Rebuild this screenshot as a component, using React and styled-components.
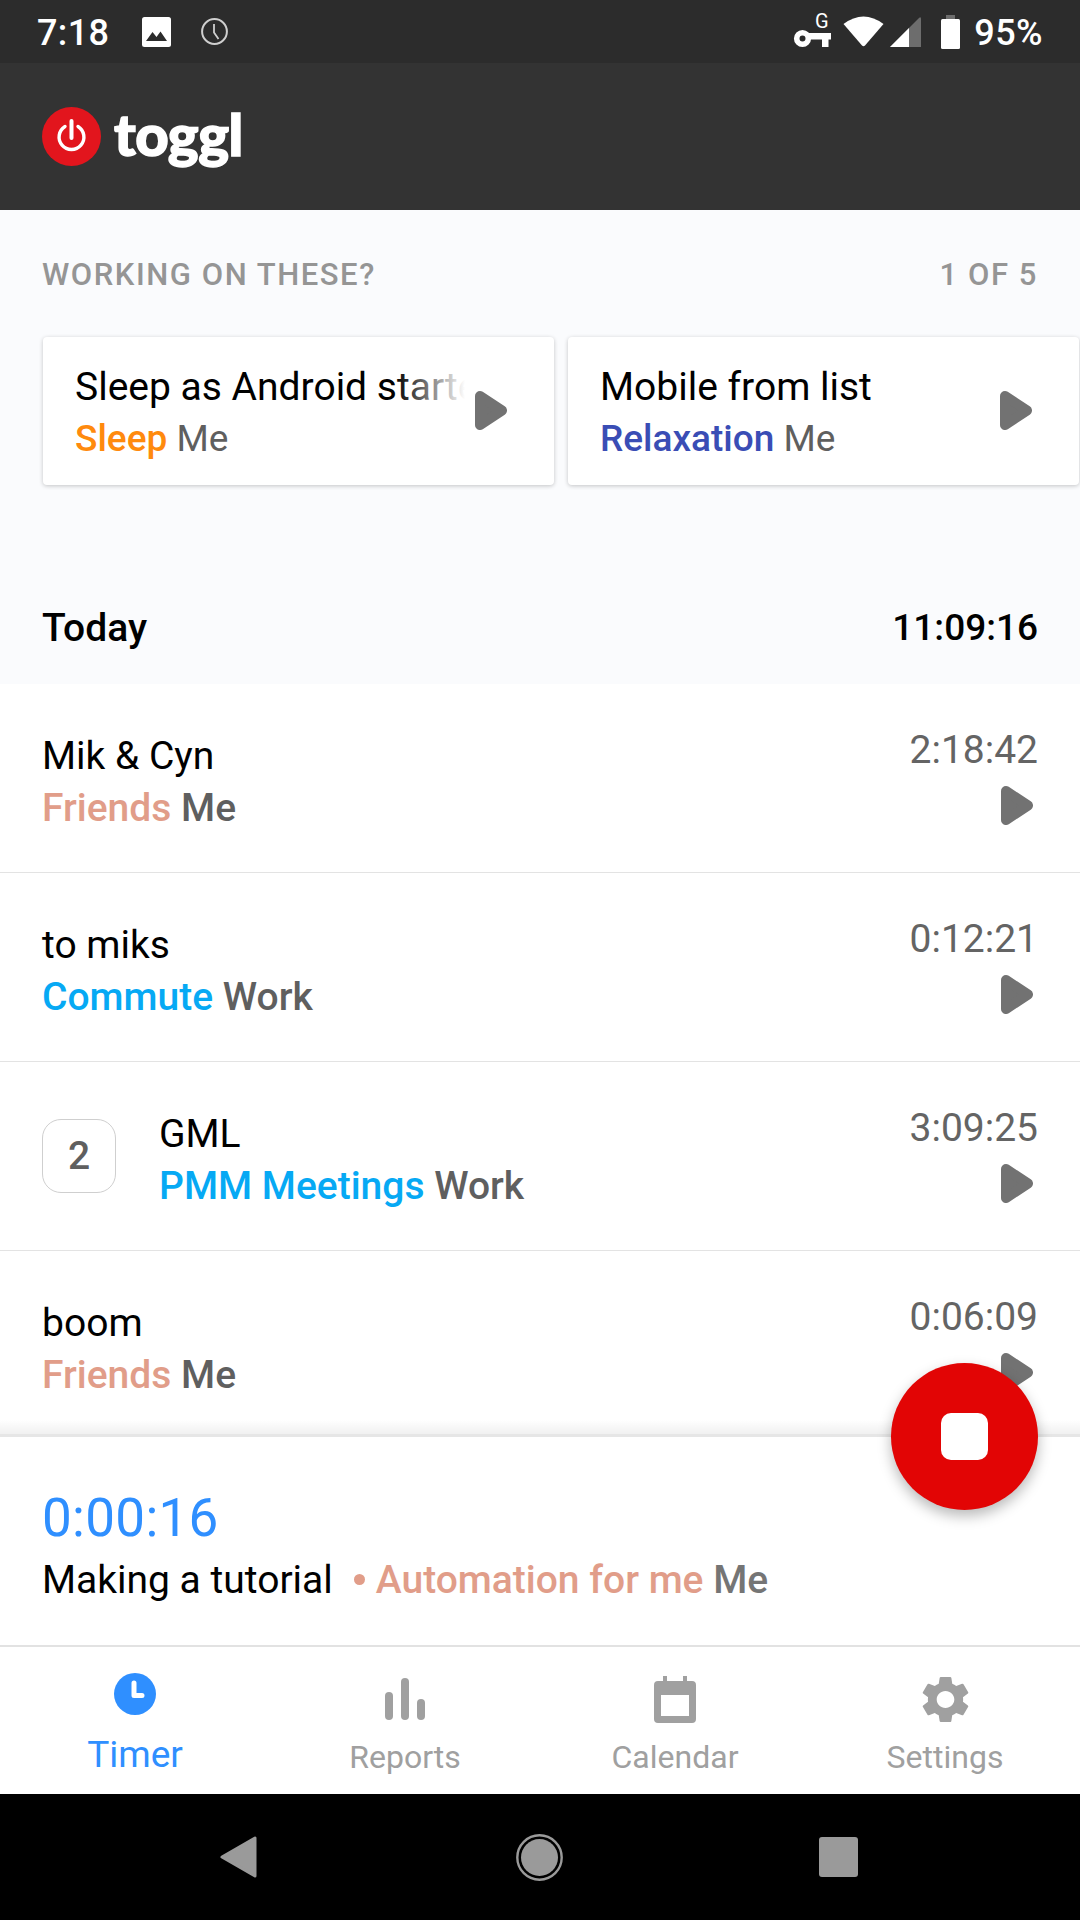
import React from "react";
import styled, { createGlobalStyle } from "styled-components";

const Global = createGlobalStyle`
  html, body { margin: 0; padding: 0; background: #fff; }
  body { font-family: Roboto, "Liberation Sans", sans-serif; }
  * { box-sizing: border-box; }
`;

const Page = styled.div`
  position: relative;
  width: 1080px;
  height: 1920px;
  display: flex;
  flex-direction: column;
  overflow: hidden;
  background: #fff;
`;

const StatusBar = styled.div`
  height: 63px;
  flex: none;
  background: #2c2c2c;
  display: flex;
  align-items: center;
  padding: 0 37px 0 37px;
  color: #fff;
  font-size: 36px;
  letter-spacing: 0.4px;
`;
const StatusLeft = styled.div`
  display: flex;
  align-items: center;
  flex: 1;
`;
const StatusTime = styled.span`
  font-weight: 500;
  margin-right: 33px;
  line-height: 63px;
  position: relative;
  top: 2px;
`;
const StatusRight = styled.div`
  display: flex;
  align-items: center;
`;
const StatusIcon = styled.svg`
  display: block;
  flex: none;
  overflow: visible;
  margin-right: ${(p) => p.$mr || 0}px;
  position: relative;
  top: ${(p) => p.$top || 0}px;
`;
const StatusPct = styled.span`
  font-weight: 500;
  margin-left: 14px;
  line-height: 63px;
  position: relative;
  top: 2px;
`;

const Header = styled.header`
  height: 147px;
  flex: none;
  background: #333333;
  display: flex;
  align-items: center;
  padding: 0 0 0 42px;
`;
const LogoMark = styled.svg`
  display: block;
  flex: none;
`;
const LogoText = styled.span`
  color: #fff;
  font-family: Lato, Roboto, sans-serif;
  font-weight: 900;
  font-size: 58px;
  letter-spacing: -0.5px;
  -webkit-text-stroke: 1.5px #fff;
  margin-left: 13px;
  line-height: 58px;
  position: relative;
  top: -3px;
`;

const Suggestions = styled.section`
  height: 474px;
  flex: none;
  background: #fafbfd;
  display: flex;
  flex-direction: column;
  padding-top: 47px;
`;
const SuggestHead = styled.div`
  display: flex;
  justify-content: space-between;
  padding: 0 42px;
  color: #959595;
  font-size: 31px;
  font-weight: 500;
  letter-spacing: 1.55px;
  line-height: 36px;
`;
const Cards = styled.div`
  display: flex;
  gap: 14px;
  margin-top: 44px;
  padding-left: 43px;
`;
const Card = styled.div`
  width: 511px;
  height: 148px;
  flex: none;
  background: #fff;
  border-radius: 4px;
  box-shadow: 0 1px 4px rgba(0, 0, 0, 0.22);
  position: relative;
  padding: 25px 0 0 32px;
`;
const CardText = styled.div`
  width: 390px;
  overflow: hidden;
  white-space: nowrap;
  position: relative;
`;
const Fade = styled.div`
  position: absolute;
  top: 0;
  right: 0;
  width: 70px;
  height: 51px;
  background: linear-gradient(to right, rgba(255, 255, 255, 0), #fff 100%);
`;
const CardPlay = styled.div`
  position: absolute;
  right: 47px;
  top: 54px;
`;
const Title = styled.div`
  color: #000;
  font-size: 39px;
  line-height: 52px;
  white-space: nowrap;
`;
const CardTitle = styled(Title)`
  line-height: 51px;
`;
const Sub = styled.div`
  font-size: 39px;
  line-height: 52px;
  color: #5f5f5f;
  white-space: nowrap;
  font-weight: 500;
`;
const CardSub = styled.div`
  font-size: 37px;
  line-height: 52px;
  color: #5f5f5f;
  white-space: nowrap;
`;
const Project = styled.span`
  color: ${(p) => p.$color};
  font-weight: 500;
`;

const DayHead = styled.div`
  margin-top: auto;
  height: 82px;
  display: flex;
  justify-content: space-between;
  align-items: flex-start;
  padding: 0 42px;
  color: #000;
  font-size: 39px;
  font-weight: 500;
  line-height: 52px;
`;
const DayTotal = styled.span`
  font-size: 37px;
`;

const List = styled.div`
  flex: 1;
  min-height: 0;
  overflow: hidden;
  position: relative;
`;
const Row = styled.div`
  height: 189px;
  border-bottom: 1px solid #e3e3e3;
  display: flex;
  align-items: flex-start;
  padding: 46px 42px 0;
`;
const Badge = styled.div`
  width: 74px;
  height: 74px;
  flex: none;
  border: 1px solid #cfcfcf;
  border-radius: 19px;
  display: flex;
  align-items: center;
  justify-content: center;
  color: #5f5f5f;
  font-size: 39px;
  font-weight: 500;
  margin: 11px 43px 0 0;
`;
const RowText = styled.div`
  flex: 1;
  min-width: 0;
`;
const RowSide = styled.div`
  display: flex;
  flex-direction: column;
  align-items: flex-end;
  color: #646464;
  font-size: 39px;
  line-height: 52px;
  margin-top: -6px;
`;
const RowPlay = styled.div`
  margin: 10px 5px 0 0;
  height: 39px;
`;

const Shade = styled.div`
  position: absolute;
  left: 0;
  right: 0;
  bottom: 0;
  height: 14px;
  background: linear-gradient(to bottom, rgba(0, 0, 0, 0), rgba(0, 0, 0, 0.06));
`;

const TimerBar = styled.div`
  height: 213px;
  flex: none;
  border-top: 3px solid #e6e6e6;
  border-bottom: 2px solid #e2e2e2;
  padding: 50px 42px 0;
`;
const Elapsed = styled.div`
  color: #2f8fff;
  font-size: 53px;
  line-height: 62px;
  letter-spacing: 0.3px;
`;
const Running = styled.div`
  display: flex;
  align-items: center;
  font-size: 39px;
  line-height: 52px;
  margin-top: 5px;
  color: #000;
  white-space: nowrap;
`;
const Dot = styled.span`
  width: 11px;
  height: 11px;
  border-radius: 50%;
  background: #e19d89;
  margin: 0 11px 0 21px;
  flex: none;
  position: relative;
  top: -1px;
`;
const RunningMeta = styled.span`
  color: #757575;
  font-weight: 500;
`;

const Fab = styled.button`
  position: absolute;
  left: 891px;
  top: 1363px;
  width: 147px;
  height: 147px;
  border-radius: 50%;
  border: 0;
  padding: 0;
  background: #e20505;
  box-shadow: 0 6px 14px rgba(0, 0, 0, 0.28);
  display: flex;
  align-items: center;
  justify-content: center;
`;
const FabStop = styled.span`
  width: 47px;
  height: 47px;
  border-radius: 10px;
  background: #fff;
`;

const Tabs = styled.nav`
  height: 147px;
  flex: none;
  display: grid;
  grid-template-columns: repeat(4, 270px);
  background: #fff;
`;
const Tab = styled.div`
  display: flex;
  flex-direction: column;
  align-items: center;
  color: ${(p) => (p.$active ? "#2f8fff" : "#a0a0a0")};
  font-size: ${(p) => (p.$active ? 37 : 32)}px;
  line-height: 40px;
`;
const TabIcon = styled.svg`
  display: block;
  flex: none;
  margin-top: ${(p) => p.$mt}px;
  margin-bottom: ${(p) => p.$mb}px;
`;

const NavBar = styled.div`
  height: 126px;
  flex: none;
  background: #000;
  display: grid;
  grid-template-columns: 296px 303px 1fr;
  align-items: center;
  padding-left: 220px;
`;
const NavIcon = styled.svg`
  display: block;
`;
const PlayIcon = styled.svg`
  display: block;
`;

const Play = () => (
  <PlayIcon width="32" height="39" viewBox="0 0 32 39">
    <path d="M5 5 L27 19.5 L5 34 Z" fill="#727272" stroke="#727272" strokeWidth="10" strokeLinejoin="round" />
  </PlayIcon>
);

const rows = [
  { t: "Mik & Cyn", p: "Friends", c: "#e19d89", m: "Me", d: "2:18:42" },
  { t: "to miks", p: "Commute", c: "#06a9f4", m: "Work", d: "0:12:21" },
  { t: "GML", p: "PMM Meetings", c: "#06a9f4", m: "Work", d: "3:09:25", n: 2 },
  { t: "boom", p: "Friends", c: "#e19d89", m: "Me", d: "0:06:09" },
];

export default function App() {
  return (
    <Page>
      <Global />
      <StatusBar>
        <StatusLeft>
          <StatusTime>7:18</StatusTime>
          <StatusIcon $mr={30} width="29" height="30" viewBox="0 0 29 30">
            <rect x="0" y="0" width="29" height="30" rx="2.5" fill="#fff" />
            <path d="M4 24 L10.5 15 L14.5 20 L18.5 14.5 L25 24 Z" fill="#2c2c2c" />
          </StatusIcon>
          <StatusIcon width="27" height="27" viewBox="0 0 27 27">
            <circle cx="13.5" cy="13.5" r="12.4" fill="none" stroke="#cfcfcf" strokeWidth="2" />
            <path d="M13 6 V14.5 L17.5 21" fill="none" stroke="#cfcfcf" strokeWidth="1.8" />
          </StatusIcon>
        </StatusLeft>
        <StatusRight>
          <StatusIcon $mr={12} $top={-1} width="37" height="34" viewBox="0 0 37 34">
            <circle cx="8.5" cy="24.5" r="5.8" fill="none" stroke="#fff" strokeWidth="5.6" />
            <path d="M14 19 H37 V25.5 H34.5 V33 H28 V25.5 H14 Z" fill="#fff" />
            <text x="28" y="14" fill="#fff" fontSize="20" fontFamily="Roboto" textAnchor="middle">G</text>
          </StatusIcon>
          <StatusIcon $mr={6} $top={-1} width="41" height="32" viewBox="0 0 41 32">
            <path d="M0.5 9 Q20.5 -6 40.5 9 L22 30.5 Q20.5 32 19 30.5 Z" fill="#fff" />
          </StatusIcon>
          <StatusIcon $mr={20} width="31" height="31" viewBox="0 0 31 31">
            <path d="M0 31 L29 2 Q31 0 31 3 V31 Z" fill="#6d6d6d" />
            <path d="M0 31 L19 12 V31 Z" fill="#fff" />
          </StatusIcon>
          <StatusIcon $top={0} width="19" height="34" viewBox="0 0 19 34">
            <rect x="5" y="0" width="9" height="5" fill="#6d6d6d" />
            <rect x="0" y="4" width="19" height="30" rx="1.5" fill="#fff" />
          </StatusIcon>
          <StatusPct>95%</StatusPct>
        </StatusRight>
      </StatusBar>

      <Header>
        <LogoMark width="59" height="59" viewBox="0 0 59 59">
          <circle cx="29.5" cy="29.5" r="29.5" fill="#e2151d" />
          <path d="M23 19.5 A12.4 12.4 0 1 0 36 19.5" fill="none" stroke="#fff" strokeWidth="3.4" strokeLinecap="round" />
          <path d="M29.5 14 V31" stroke="#fff" strokeWidth="4" strokeLinecap="round" />
        </LogoMark>
        <LogoText>toggl</LogoText>
      </Header>

      <Suggestions>
        <SuggestHead>
          <span>WORKING ON THESE?</span>
          <span>1 OF 5</span>
        </SuggestHead>
        <Cards>
          <Card>
            <CardText>
              <CardTitle>Sleep as Android started</CardTitle>
              <Fade />
              <CardSub>
                <Project $color="#ff8a0d">Sleep</Project> Me
              </CardSub>
            </CardText>
            <CardPlay><Play /></CardPlay>
          </Card>
          <Card>
            <CardText>
              <CardTitle>Mobile from list</CardTitle>
              <CardSub>
                <Project $color="#3a4db5">Relaxation</Project> Me
              </CardSub>
            </CardText>
            <CardPlay><Play /></CardPlay>
          </Card>
        </Cards>
        <DayHead>
          <span>Today</span>
          <DayTotal>11:09:16</DayTotal>
        </DayHead>
      </Suggestions>

      <List>
        {rows.map((r) => (
          <Row key={r.t}>
            {r.n ? <Badge>{r.n}</Badge> : null}
            <RowText>
              <Title>{r.t}</Title>
              <Sub>
                <Project $color={r.c}>{r.p}</Project> {r.m}
              </Sub>
            </RowText>
            <RowSide>
              {r.d}
              <RowPlay><Play /></RowPlay>
            </RowSide>
          </Row>
        ))}
        <Shade />
      </List>

      <TimerBar>
        <Elapsed>0:00:16</Elapsed>
        <Running>
          Making a tutorial
          <Dot />
          <Project $color="#e19d89">Automation for me</Project>
          <RunningMeta>&nbsp;Me</RunningMeta>
        </Running>
      </TimerBar>
      <Fab aria-label="Stop"><FabStop /></Fab>

      <Tabs>
        <Tab $active>
          <TabIcon $mt={26} $mb={20} width="42" height="42" viewBox="0 0 42 42">
            <circle cx="21" cy="21" r="21" fill="#2f8fff" />
            <path d="M20 10 V22.5 H28" fill="none" stroke="#fff" strokeWidth="5" strokeLinecap="round" strokeLinejoin="round" />
          </TabIcon>
          Timer
        </Tab>
        <Tab>
          <TabIcon $mt={31} $mb={17} width="40" height="42" viewBox="0 0 40 42">
            <rect x="0" y="14" width="8" height="28" rx="4" fill="#a0a0a0" />
            <rect x="16" y="0" width="8" height="42" rx="4" fill="#a0a0a0" />
            <rect x="32" y="21" width="8" height="21" rx="4" fill="#a0a0a0" />
          </TabIcon>
          Reports
        </Tab>
        <Tab>
          <TabIcon $mt={29} $mb={14} width="42" height="47" viewBox="0 0 42 47">
            <path d="M9 0 H13 V5 H29 V0 H33 V5 H38 A4 4 0 0 1 42 9 V43 A4 4 0 0 1 38 47 H4 A4 4 0 0 1 0 43 V9 A4 4 0 0 1 4 5 H9 Z" fill="#a0a0a0" />
            <rect x="7" y="19" width="28" height="21" fill="#fff" />
          </TabIcon>
          Calendar
        </Tab>
        <Tab>
          <TabIcon $mt={29} $mb={14} width="47" height="47" viewBox="2.4 2 19.2 20" preserveAspectRatio="none">
            <path
              fill="#a0a0a0"
              d="M19.14 12.94c.04-.3.06-.61.06-.94 0-.32-.02-.64-.07-.94l2.03-1.58c.18-.14.23-.41.12-.61l-1.92-3.32c-.12-.22-.37-.29-.59-.22l-2.39.96c-.5-.38-1.03-.7-1.62-.94l-.36-2.54c-.04-.24-.24-.41-.48-.41h-3.84c-.24 0-.43.17-.47.41l-.36 2.54c-.59.24-1.13.57-1.62.94l-2.39-.96c-.22-.08-.47 0-.59.22L2.74 8.87c-.12.21-.08.47.12.61l2.03 1.58c-.05.3-.09.63-.09.94s.02.64.07.94l-2.03 1.58c-.18.14-.23.41-.12.61l1.92 3.32c.12.22.37.29.59.22l2.39-.96c.5.38 1.03.7 1.62.94l.36 2.54c.05.24.24.41.48.41h3.84c.24 0 .44-.17.47-.41l.36-2.54c.59-.24 1.13-.56 1.62-.94l2.39.96c.22.08.47 0 .59-.22l1.92-3.32c.12-.22.07-.47-.12-.61l-2.01-1.58zM12 15.6c-1.98 0-3.6-1.62-3.6-3.6s1.62-3.6 3.6-3.6 3.6 1.62 3.6 3.6-1.62 3.6-3.6 3.6z"
            />
          </TabIcon>
          Settings
        </Tab>
      </Tabs>

      <NavBar>
        <NavIcon width="37" height="42" viewBox="0 0 37 42">
          <path d="M35 2 V40 L2 21 Z" fill="#9a9a9a" stroke="#9a9a9a" strokeWidth="3" strokeLinejoin="round" />
        </NavIcon>
        <NavIcon width="47" height="47" viewBox="0 0 47 47">
          <circle cx="23.5" cy="23.5" r="22.2" fill="none" stroke="#9a9a9a" strokeWidth="2.4" />
          <circle cx="23.5" cy="23.5" r="18.5" fill="#9a9a9a" />
        </NavIcon>
        <NavIcon width="39" height="40" viewBox="0 0 39 40">
          <rect width="39" height="40" rx="3" fill="#9a9a9a" />
        </NavIcon>
      </NavBar>
    </Page>
  );
}
